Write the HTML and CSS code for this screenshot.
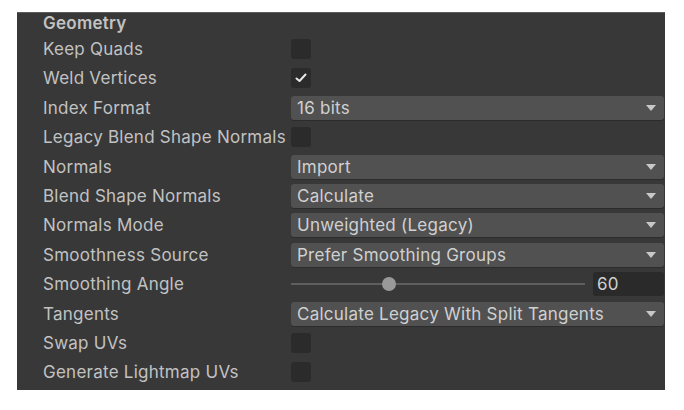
FILE: index.html
```html
<!DOCTYPE html>
<html lang="en">
<head>
    <meta charset="UTF-8">
    <meta name="viewport" content="width=device-width, initial-scale=1.0">
    <title>Model Import Settings</title>
    <link rel="stylesheet" href="styles.css">
</head>
<body>
    <div class="inspector">
        <!-- Section header -->
        <div class="header">Geometry</div>

        <div class="row">
            <span class="label">Keep Quads</span>
            <span class="checkbox"></span>
        </div>
        <div class="row">
            <span class="label">Weld Vertices</span>
            <span class="checkbox checked">
                <svg width="12" height="10" viewBox="0 0 12 10"><polyline points="1.5,5.5 4.5,8 10.5,1.5" fill="none" stroke="#e8e8e8" stroke-width="2" stroke-linecap="round" stroke-linejoin="round"/></svg>
            </span>
        </div>
        <div class="row">
            <span class="label">Index Format</span>
            <div class="dropdown"><span>16 bits</span><i class="arrow"></i></div>
        </div>
        <div class="row">
            <span class="label">Legacy Blend Shape Normals</span>
            <span class="checkbox"></span>
        </div>
        <div class="row">
            <span class="label">Normals</span>
            <div class="dropdown"><span>Import</span><i class="arrow"></i></div>
        </div>
        <div class="row">
            <span class="label">Blend Shape Normals</span>
            <div class="dropdown"><span>Calculate</span><i class="arrow"></i></div>
        </div>
        <div class="row">
            <span class="label">Normals Mode</span>
            <div class="dropdown"><span>Unweighted (Legacy)</span><i class="arrow"></i></div>
        </div>
        <div class="row">
            <span class="label">Smoothness Source</span>
            <div class="dropdown"><span>Prefer Smoothing Groups</span><i class="arrow"></i></div>
        </div>
        <div class="row">
            <span class="label">Smoothing Angle</span>
            <div class="slider">
                <div class="track">
                    <span class="thumb" style="left: 33.33%"></span>
                </div>
                <div class="number">60</div>
            </div>
        </div>
        <div class="row">
            <span class="label">Tangents</span>
            <div class="dropdown"><span>Calculate Legacy With Split Tangents</span><i class="arrow"></i></div>
        </div>
        <div class="row">
            <span class="label">Swap UVs</span>
            <span class="checkbox"></span>
        </div>
        <div class="row">
            <span class="label">Generate Lightmap UVs</span>
            <span class="checkbox"></span>
        </div>
    </div>
</body>
</html>
```

FILE: styles.css
```css
body {
    margin: 0;
    padding: 12px 19px 0 17px;
    background: #ffffff;
    font-family: Inter, "Noto Sans", sans-serif;
    font-size: 17px;
    letter-spacing: 0.25px;
}

.inspector {
    width: 648px;
    height: 378px;
    box-sizing: border-box;
    background: #383838;
    border-top: 1px solid #5c5c5c;
    padding: 0 1px 0 26px;
    color: #c2c2c2;
}

.header {
    height: 21.3px;
    line-height: 21.3px;
    font-weight: 600;
}

.row {
    display: grid;
    grid-template-columns: 248px 1fr;
    align-items: center;
    height: 29.4px;
}

.label {
    white-space: nowrap;
}

.checkbox {
    width: 20px;
    height: 20px;
    background: #2b2b2b;
    border-radius: 3px;
    display: flex;
    align-items: center;
    justify-content: center;
}

.dropdown {
    height: 24px;
    box-sizing: border-box;
    background: #515151;
    border-radius: 3px;
    box-shadow: 0 1px 0 #2c2c2c;
    padding: 0 8px 0 6px;
    display: flex;
    align-items: center;
    justify-content: space-between;
    color: #d0d0d0;
}

.arrow {
    width: 0;
    height: 0;
    border-left: 5px solid transparent;
    border-right: 5px solid transparent;
    border-top: 6px solid #c8c8c8;
}

.slider {
    display: flex;
    align-items: center;
    gap: 8px;
}

.track {
    flex: 1;
    height: 2px;
    background: #5e5e5e;
    position: relative;
}

.thumb {
    position: absolute;
    top: -6px;
    width: 14px;
    height: 14px;
    margin-left: -7px;
    border-radius: 50%;
    background: #999999;
}

.number {
    width: 71px;
    height: 24px;
    box-sizing: border-box;
    background: #2a2a2a;
    border-radius: 3px;
    padding-left: 4px;
    line-height: 24px;
    color: #d0d0d0;
}
```
